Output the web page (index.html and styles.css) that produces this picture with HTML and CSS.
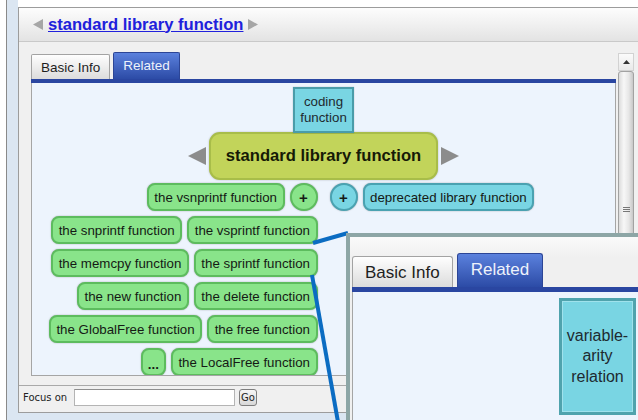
FILE: index.html
```html
<!DOCTYPE html>
<html>
<head>
<meta charset="utf-8">
<link rel="stylesheet" href="styles.css">
</head>
<body>
<div class="screen">
  <div class="edge"></div>
  <div class="frame">
    <div class="frame-inner">
      <div class="panel">
        <div class="head">
          <svg class="hd-arrow" width="10" height="11" viewBox="0 0 10 11"><polygon points="10,0 10,11 0,5.5" fill="#a6a6a6"/></svg>
          <a class="title" href="#">standard library function</a>
          <svg class="hd-arrow" width="10" height="11" viewBox="0 0 10 11"><polygon points="0,0 0,11 10,5.5" fill="#a6a6a6"/></svg>
        </div>
        <div class="body">
          <div class="tabpane">
            <div class="tabs">
              <div class="tab">Basic Info</div>
              <div class="tab active">Related</div>
            </div>
            <div class="tabbar"></div>
            <div class="canvas">
              <div class="coding">coding<br>function</div>
              <div class="center-row">
                <svg width="18" height="18" viewBox="0 0 18 18"><polygon points="18,0 18,18 0,9" fill="#8c8c8c"/></svg>
                <div class="main-node">standard library function</div>
                <svg width="18" height="18" viewBox="0 0 18 18"><polygon points="0,0 0,18 18,9" fill="#8c8c8c"/></svg>
              </div>
              <div class="rel">
                <div class="cell left">
                  <span class="node g">the vsnprintf function</span>
                  <span class="node g plus">+</span>
                </div>
                <div class="cell right">
                  <span class="node t plus">+</span>
                  <span class="node t">deprecated library function</span>
                </div>
                <div class="cell left">
                  <span class="node g">the snprintf function</span>
                  <span class="node g">the vsprintf function</span>
                </div>
                <div class="cell left">
                  <span class="node g">the memcpy function</span>
                  <span class="node g">the sprintf function</span>
                </div>
                <div class="cell left">
                  <span class="node g">the new function</span>
                  <span class="node g">the delete function</span>
                </div>
                <div class="cell left">
                  <span class="node g">the GlobalFree function</span>
                  <span class="node g">the free function</span>
                </div>
                <div class="cell left">
                  <span class="node g more">...</span>
                  <span class="node g">the LocalFree function</span>
                </div>
              </div>
            </div>
          </div>
          <div class="scrollbar">
            <div class="sb-up"><svg width="7" height="4" viewBox="0 0 7 4"><polygon points="0,4 7,4 3.5,0" fill="#333"/></svg></div>
            <div class="sb-thumb"><div class="grip"></div></div>
          </div>
        </div>
        <div class="foot">
          <span class="focus-label">Focus on</span>
          <input class="focus-input" type="text">
          <button class="go">Go</button>
        </div>
      </div>
    </div>
  </div>

  <svg class="links" width="638" height="420" viewBox="0 0 638 420">
    <line x1="313" y1="243" x2="348" y2="233" stroke="#0b6cc2" stroke-width="4"/>
    <line x1="312" y1="275" x2="338" y2="422" stroke="#0b6cc2" stroke-width="4"/>
  </svg>

  <div class="zoom">
    <div class="z-tabs">
      <div class="z-tab">Basic Info</div>
      <div class="z-tab active">Related</div>
    </div>
    <div class="z-bar"></div>
    <div class="z-canvas">
      <div class="z-box">variable-arity relation</div>
    </div>
  </div>
</div>
</body>
</html>
```

FILE: styles.css
```css
* { box-sizing: border-box; }
html, body { margin: 0; padding: 0; }
body {
  width: 638px;
  height: 420px;
  overflow: hidden;
  background: #fff;
  font-family: "Liberation Sans", Arial, sans-serif;
  color: #1b1b1b;
}
.screen {
  position: relative;
  display: flex;
  width: 638px;
  height: 420px;
  overflow: hidden;
}
.edge {
  flex: none;
  width: 7px;
  background: #fff;
  border-right: 1px solid #8a8a8a;
}
.frame {
  flex: 1;
  min-width: 0;
  background: #dbe6f2;
  padding-left: 11px;
}
.frame-inner {
  height: 100%;
  padding-top: 7px;
  background: linear-gradient(#fff 0, #fff 7px, #dbe6f2 7px);
}
.panel {
  width: 700px;
  height: 406px;
  border: 1px solid #9c9c9c;
  border-right: none;
  display: flex;
  flex-direction: column;
  background: #f0f0f0;
}
.head {
  height: 34px;
  flex: none;
  border-bottom: 1px solid #c9c9c9;
  background: linear-gradient(#fdfdfd, #e3e3e3);
  display: flex;
  align-items: center;
  padding: 0 0 0 14px;
  gap: 5px;
}
.title {
  color: #2020dc;
  font-weight: bold;
  font-size: 16.6px;
  text-decoration: underline;
}
.body {
  height: 343px;
  flex: none;
  display: flex;
  padding: 10px 0 0 12px;
}
.tabpane {
  width: 585px;
  flex: none;
  display: flex;
  flex-direction: column;
}
.tabs {
  height: 27px;
  display: flex;
  align-items: flex-end;
  gap: 3px;
}
.tab {
  height: 25px;
  padding: 1px 9px 0;
  display: flex;
  align-items: center;
  font-size: 13.5px;
  border: 1px solid #a3a3a3;
  border-bottom: none;
  border-radius: 2px 2px 0 0;
  background: linear-gradient(#fefefe, #dcdcdc);
  color: #1e1e1e;
}
.tab.active {
  height: 27px;
  padding: 0 9px 1px;
  border-color: #2c4596;
  background: linear-gradient(#5b81dd, #2c4ba6);
  color: #eef2fb;
}
.tabbar {
  height: 4px;
  background: #2a46a1;
}
.canvas {
  height: 293px;
  border: 1px solid #a5a5a5;
  border-top: none;
  background: #edf4fd;
  display: flex;
  flex-direction: column;
  align-items: center;
  padding-top: 4px;
  overflow: hidden;
}
.coding {
  position: relative;
  z-index: 1;
  width: 61px;
  height: 46px;
  flex: none;
  border: 2px solid #4a9ca9;
  background: #79d5e3;
  font-size: 13.3px;
  line-height: 16px;
  text-align: center;
  padding-top: 5px;
  color: #1e2a30;
  box-shadow: 0 0 1px rgba(0,0,0,.3);
}
.center-row {
  display: flex;
  align-items: center;
  margin-top: -1px;
  gap: 3px;
  flex: none;
}
.main-node {
  height: 48px;
  padding: 0 15px;
  display: flex;
  align-items: center;
  border: 2px solid #a8bd49;
  border-radius: 11px;
  background: #c2d45a;
  font-weight: bold;
  font-size: 16.6px;
  color: #161a06;
  box-shadow: 0 0 2px rgba(0,0,0,.25);
}
.rel {
  align-self: stretch;
  flex: none;
  margin-top: 3px;
  display: grid;
  grid-template-columns: 1fr 1fr;
  grid-auto-rows: 28px;
  column-gap: 12px;
  row-gap: 5px;
}
.cell {
  display: flex;
  gap: 5px;
}
.cell.left {
  grid-column: 1;
  justify-content: flex-end;
}
.cell.right {
  grid-column: 2;
}
.node {
  display: inline-flex;
  align-items: center;
  height: 28px;
  padding: 0 5.5px;
  border: 2px solid;
  border-radius: 8px;
  font-size: 13.3px;
  white-space: nowrap;
  color: #151a15;
  box-shadow: 0 0 1.5px rgba(0,0,0,.35);
}
.g {
  background: #89e48a;
  border-color: #5dbc5e;
}
.t {
  background: #79d5e3;
  border-color: #4aa2b1;
}
.plus {
  width: 28px;
  padding: 0;
  justify-content: center;
  border-radius: 50%;
  font-weight: bold;
  font-size: 15px;
}
.more {
  align-items: flex-end;
  font-weight: bold;
  padding: 0 5px 2px;
}
.scrollbar {
  width: 16px;
  flex: none;
  margin: 1px 0 0 2px;
  display: flex;
  flex-direction: column;
}
.sb-up {
  height: 18px;
  border: 1px solid #d2d2d2;
  background: linear-gradient(#fbfbfb, #e9e9e9);
  display: flex;
  align-items: center;
  justify-content: center;
}
.sb-thumb {
  height: 260px;
  border: 1px solid #a2a2a2;
  border-radius: 3px 3px 0 0;
  background: linear-gradient(to right, #dcdcdc, #f7f7f7 35%, #e6e6e6 70%, #c8c8c8);
  display: flex;
  justify-content: center;
  padding-top: 135px;
}
.grip {
  width: 7px;
  height: 6px;
  background: repeating-linear-gradient(#777 0, #777 1px, transparent 1px, transparent 2px);
}
.foot {
  flex: 1;
  border-top: 1px solid #a9a9a9;
  display: flex;
  align-items: flex-start;
  padding: 3px 0 0 4px;
  font-family: "DejaVu Sans", sans-serif;
  font-size: 10px;
}
.focus-label {
  width: 51px;
  margin-top: 3px;
  color: #222;
}
.focus-input {
  width: 161px;
  height: 17px;
  border: 1px solid #b4b4b4;
  border-top-color: #8e8e8e;
  background: #fff;
  margin: 0;
  padding: 0;
}
.go {
  width: 18px;
  height: 17px;
  margin: 0 0 0 4px;
  padding: 0;
  border: 1px solid #7e7e7e;
  border-radius: 3px;
  background: linear-gradient(#f6f6f6, #d8d8d8);
  font-family: "DejaVu Sans", sans-serif;
  font-size: 10px;
  color: #222;
}
.links {
  position: absolute;
  left: 0;
  top: 0;
  z-index: 2;
}
.zoom {
  position: absolute;
  z-index: 3;
  left: 346px;
  top: 233px;
  width: 320px;
  height: 220px;
  border: 4px solid #8da6a6;
  background: linear-gradient(#fafafa, #f0f0f0 20px);
  padding: 16px 0 0 2px;
  display: flex;
  flex-direction: column;
}
.z-tabs {
  height: 34px;
  display: flex;
  align-items: flex-end;
  gap: 4px;
}
.z-tab {
  height: 31px;
  padding: 2px 12px 0;
  display: flex;
  align-items: center;
  font-size: 17px;
  border: 1px solid #a3a3a3;
  border-bottom: none;
  border-radius: 3px 3px 0 0;
  background: linear-gradient(#fefefe, #dcdcdc);
  color: #1e1e1e;
}
.z-tab.active {
  height: 34px;
  padding: 0 13px 2px;
  border-color: #2c4596;
  background: linear-gradient(#5b81dd, #2c4ba6);
  color: #eef2fb;
}
.z-bar {
  height: 5px;
  background: #2a46a1;
}
.z-canvas {
  flex: 1;
  border-left: 1px solid #a5a5a5;
  background: #edf4fd;
  padding: 6px 0 0 206px;
}
.z-box {
  width: 77px;
  height: 117px;
  border: 3px solid #4fa3ad;
  background: #79d5e3;
  display: flex;
  align-items: center;
  justify-content: center;
  text-align: center;
  font-size: 16px;
  line-height: 20.5px;
  color: #1e2a30;
  box-shadow: inset 0 0 0 1px #9fe2ec;
}
```
